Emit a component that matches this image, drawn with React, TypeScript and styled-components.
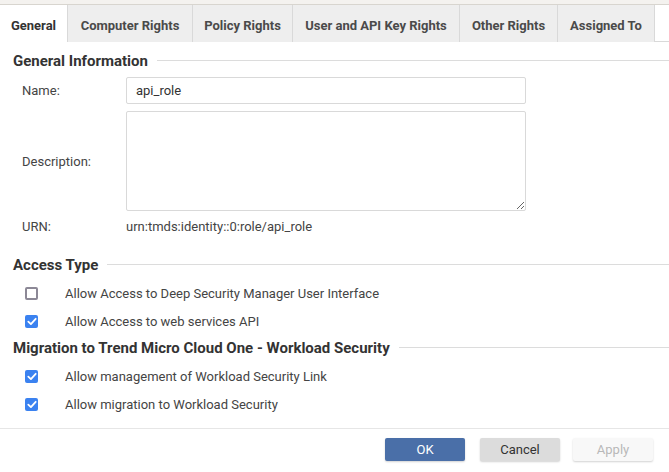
import React from "react";
import styled, { createGlobalStyle } from "styled-components";

const Global = createGlobalStyle`
  html, body { margin: 0; padding: 0; background: #fff; }
  body { font-family: Roboto, "Liberation Sans", Arial, sans-serif; color: #333; }
  * { box-sizing: border-box; }
`;

const Page = styled.div`
  width: 669px;
  height: 472px;
  display: flex;
  flex-direction: column;
  background: #fff;
  overflow: hidden;
`;

const TopStrip = styled.div`
  height: 5px;
  background: #f4f2ef;
  border-bottom: 1px solid #d8d5cf;
  flex: none;
`;

const TabBar = styled.div`
  display: flex;
  height: 37px;
  flex: none;
`;

const Tab = styled.div<{ $active?: boolean; $w: number }>`
  width: ${(p) => p.$w}px;
  display: flex;
  align-items: center;
  justify-content: center;
  padding-top: 3px;
  font-size: 13px;
  font-weight: 700;
  color: ${(p) => (p.$active ? "#333" : "#4a4a4a")};
  background: ${(p) => (p.$active ? "#fff" : "#eeeeee")};
  border-right: 1px solid #d9d9d9;
  white-space: nowrap;
`;

const TabFill = styled.div`
  flex: 1;
  border-bottom: 1px solid #d9d9d9;
`;

const Body = styled.div`
  display: flex;
  flex-direction: column;
  padding: 10px 0 0 13px;
  flex: 1;
`;

const Heading = styled.div<{ $mt: number }>`
  display: flex;
  align-items: center;
  gap: 9px;
  height: 18px;
  margin-top: ${(p) => p.$mt}px;
  font-size: 15px;
  font-weight: 700;
  color: #333;
  white-space: nowrap;
  &::after {
    content: "";
    flex: 1;
    height: 1px;
    background: #dcdcdc;
    margin-top: -1px;
  }
`;

const FormRow = styled.div<{ $mt: number; $h?: number }>`
  display: grid;
  grid-template-columns: 104px 400px;
  align-items: center;
  padding-left: 9px;
  margin-top: ${(p) => p.$mt}px;
  min-height: ${(p) => p.$h ?? 0}px;
`;

const Label = styled.span`
  font-size: 13px;
  color: #444;
`;

const TextInput = styled.input`
  height: 27px;
  width: 400px;
  border: 1px solid #d9d9d9;
  border-radius: 2px;
  padding: 0 9px;
  font-family: inherit;
  font-size: 13px;
  color: #333;
  outline: none;
`;

const TextArea = styled.textarea`
  height: 100px;
  width: 400px;
  border: 1px solid #d9d9d9;
  border-radius: 2px;
  font-family: inherit;
  font-size: 13px;
  outline: none;
  display: block;
`;

const Value = styled.span`
  font-size: 13px;
  color: #444;
`;

const CheckRows = styled.div<{ $mt: number }>`
  display: flex;
  flex-direction: column;
  margin-top: ${(p) => p.$mt}px;
`;

const CheckRow = styled.label`
  display: flex;
  align-items: center;
  height: 28px;
  padding-left: 12px;
  font-size: 13px;
  color: #444;
`;

const Box = styled.span<{ $checked?: boolean }>`
  width: 13px;
  height: 13px;
  border-radius: 2px;
  margin-right: 27px;
  display: flex;
  align-items: center;
  justify-content: center;
  background: ${(p) => (p.$checked ? "#3b82f0" : "#fff")};
  border: ${(p) => (p.$checked ? "none" : "2px solid #8c8896")};
  flex: none;
`;

const Footer = styled.div`
  flex: none;
  height: 44px;
  border-top: 1px solid #e6e6e6;
  display: flex;
  justify-content: flex-end;
  align-items: flex-start;
  padding: 9px 16px 0 0;
`;

const Button = styled.button<{ $kind: "primary" | "secondary" | "disabled"; $ml?: number }>`
  width: 80px;
  height: 23px;
  margin-left: ${(p) => p.$ml ?? 0}px;
  border: none;
  border-radius: 2px;
  font-family: inherit;
  font-size: 13px;
  background: ${(p) =>
    p.$kind === "primary" ? "#4a6fa8" : p.$kind === "secondary" ? "#dcdcdc" : "#f8f8f8"};
  color: ${(p) => (p.$kind === "primary" ? "#fff" : p.$kind === "secondary" ? "#333" : "#b8b8b8")};
  box-shadow: 0 1px 2px rgba(0, 0, 0, 0.18);
`;

const Check = () => (
  <svg width="10" height="9" viewBox="0 0 10 9">
    <path d="M1.3 4.6 L3.9 7.1 L8.7 1.8" fill="none" stroke="#fff" strokeWidth="1.8" strokeLinecap="round" strokeLinejoin="round" />
  </svg>
);

const tabs: [string, number][] = [
  ["General", 68],
  ["Computer Rights", 125],
  ["Policy Rights", 100],
  ["User and API Key Rights", 167],
  ["Other Rights", 98],
  ["Assigned To", 97],
];

export default function App() {
  return (
    <Page>
      <Global />
      <TopStrip />
      <TabBar>
        {tabs.map(([t, w], i) => (
          <Tab key={t} $active={i === 0} $w={w}>
            {t}
          </Tab>
        ))}
        <TabFill />
      </TabBar>
      <Body>
        <Heading $mt={0}>General Information</Heading>
        <FormRow $mt={7}>
          <Label>Name:</Label>
          <TextInput defaultValue="api_role" />
        </FormRow>
        <FormRow $mt={7}>
          <Label>Description:</Label>
          <TextArea />
        </FormRow>
        <FormRow $mt={5} $h={20}>
          <Label>URN:</Label>
          <Value>urn:tmds:identity::0:role/api_role</Value>
        </FormRow>
        <Heading $mt={20}>Access Type</Heading>
        <CheckRows $mt={5}>
          <CheckRow>
            <Box />
            Allow Access to Deep Security Manager User Interface
          </CheckRow>
          <CheckRow>
            <Box $checked>
              <Check />
            </Box>
            Allow Access to web services API
          </CheckRow>
        </CheckRows>
        <Heading $mt={4}>Migration to Trend Micro Cloud One - Workload Security</Heading>
        <CheckRows $mt={5}>
          <CheckRow>
            <Box $checked>
              <Check />
            </Box>
            Allow management of Workload Security Link
          </CheckRow>
          <CheckRow>
            <Box $checked>
              <Check />
            </Box>
            Allow migration to Workload Security
          </CheckRow>
        </CheckRows>
      </Body>
      <Footer>
        <Button $kind="primary">OK</Button>
        <Button $kind="secondary" $ml={15}>Cancel</Button>
        <Button $kind="disabled" $ml={13}>Apply</Button>
      </Footer>
    </Page>
  );
}
